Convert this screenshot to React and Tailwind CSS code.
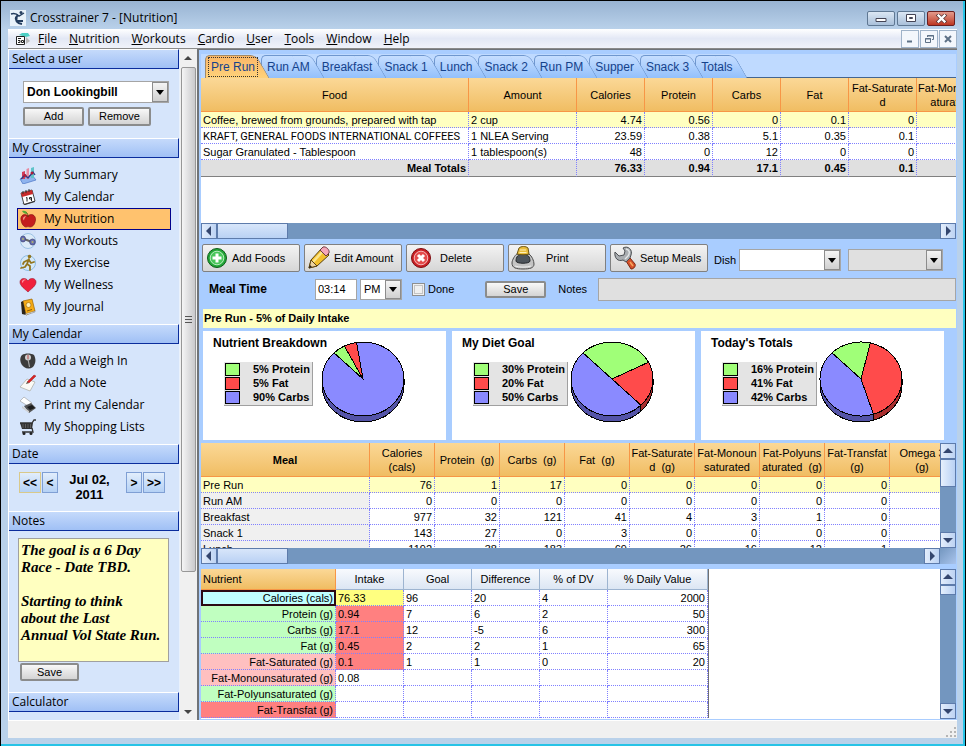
import React, { useState } from "react";

const MENU = ["File", "Nutrition", "Workouts", "Cardio", "User", "Tools", "Window", "Help"];

const TABS = ["Pre Run", "Run AM", "Breakfast", "Snack 1", "Lunch", "Snack 2", "Run PM", "Supper", "Snack 3", "Totals"];

const NOTES = "The goal is a 6 Day\nRace - Date TBD.\n\nStarting to think\nabout the Last\nAnnual Vol State Run.";

const FOODS = [
  ["Coffee, brewed from grounds, prepared with tap", "2 cup", "4.74", "0.56", "0", "0.1", "0", ""],
  ["KRAFT, GENERAL FOODS INTERNATIONAL COFFEES", "1 NLEA Serving", "23.59", "0.38", "5.1", "0.35", "0.1", ""],
  ["Sugar Granulated - Tablespoon", "1 tablespoon(s)", "48", "0", "12", "0", "0", ""],
];

const MEALS = [
  ["Pre Run", 76, 1, 17, 0, 0, 0, 0, 0, ""],
  ["Run AM", 0, 0, 0, 0, 0, 0, 0, 0, ""],
  ["Breakfast", 977, 32, 121, 41, 4, 3, 1, 0, ""],
  ["Snack 1", 143, 27, 0, 3, 0, 0, 0, 0, ""],
  ["Lunch", 1192, 38, 183, 69, 26, 16, 12, 1, ""],
];

const NUTRIENTS = [
  { name: "Calories (cals)", values: ["76.33", "96", "20", "4", "2000"], head: "bg-[#bfffff] outline-2 -outline-offset-2 outline-[#2b0a14]", intake: "bg-[#ffff80]" },
  { name: "Protein (g)", values: ["0.94", "7", "6", "2", "50"], head: "bg-[#c0ffc0]", intake: "bg-[#ff8080]" },
  { name: "Carbs (g)", values: ["17.1", "12", "-5", "6", "300"], head: "bg-[#c0ffc0]", intake: "bg-[#ff8080]" },
  { name: "Fat (g)", values: ["0.45", "2", "2", "1", "65"], head: "bg-[#c0ffc0]", intake: "bg-[#ff8080]" },
  { name: "Fat-Saturated (g)", values: ["0.1", "1", "1", "0", "20"], head: "bg-[#ffc0c0]", intake: "bg-[#ff8080]" },
  { name: "Fat-Monounsaturated (g)", values: ["0.08", "", "", "", ""], head: "bg-[#ffc0c0]", intake: "" },
  { name: "Fat-Polyunsaturated (g)", values: ["", "", "", "", ""], head: "bg-[#c0ffc0]", intake: "" },
  { name: "Fat-Transfat (g)", values: ["", "", "", "", ""], head: "bg-[#ff8080]", intake: "" },
];

const CHARTS = [
  { title: "Nutrient Breakdown", protein: 5, fat: 5, carbs: 90 },
  { title: "My Diet Goal", protein: 30, fat: 20, carbs: 50 },
  { title: "Today's Totals", protein: 16, fat: 41, carbs: 42 },
];

const ICONS = {
  summary: (
    <>
      <path d="M1 13l12-4 4 5-13 4z" fill="#8fb4ee" stroke="#4a74c4" strokeWidth=".7" />
      <path d="M3 6l3-1v8H3z" fill="#d23c5a" />
      <path d="M7.500 3l2.500-1v11H7.500z" fill="#e88aa0" />
      <path d="M12 2l3-1v11h-3z" fill="#5fc4c9" />
      <path d="M2 13l4-4 3 3 5-6 2 3" fill="none" stroke="#2c3b88" strokeWidth="1.300" />
      <circle cx="6" cy="9.500" r="1.500" fill="#b01d38" />
      <circle cx="13" cy="7" r="1.500" fill="#b01d38" />
    </>
  ),
  calendar: (
    <>
      <path d="M2 5l11-3 3 11-11 3.500z" fill="#fff" stroke="#444" />
      <path d="M2 5l11-3 1 4L3 9z" fill="#c92a2a" />
      <path d="M4 3v3M7 2v3M10 1v3" stroke="#333" />
      <path d="M3 15l3 1 10-3v1L6 17z" fill="#333" />
      <path d="M7 10l1-.5v4M10.500 9.500h2v3.500M10.500 9.500v1.500h2" fill="none" stroke="#222" />
    </>
  ),
  apple: (
    <>
      <path d="M9 6C6 3 1 5 2 10c.5 4 3 7 5 7 1 0 1.500-.4 2-.4s1 .4 2 .4c3 0 5-3 5.500-7C17 5 12 3 9 6z" fill="#c41e1e" stroke="#7d0f0f" strokeWidth=".6" />
      <path d="M4 9c0-2 2-3 3-2.500-1 1-2 2-2 4z" fill="#f59a8c" />
      <path d="M9 7c0-2 0-3-2-5" fill="none" stroke="#5b3a12" />
      <path d="M8 4c-2 0-4-1-5-3 3-.5 5 0 5 3z" fill="#55a834" />
    </>
  ),
  workouts: (
    <>
      <circle cx="9" cy="9" r="7.500" fill="#dcebf8" stroke="#9cc2e4" />
      <path d="M5 7l8 3" stroke="#666" strokeWidth="2" />
      <ellipse cx="4" cy="7" rx="2.500" ry="3" fill="#6a70ae" stroke="#3a3f74" strokeWidth=".7" />
      <ellipse cx="13.500" cy="10" rx="2.800" ry="3" fill="#6a70ae" stroke="#3a3f74" strokeWidth=".7" />
      <circle cx="4" cy="7" r="1" fill="#b3b46c" />
      <circle cx="13.500" cy="10" r="1" fill="#b3b46c" />
    </>
  ),
  exercise: (
    <>
      <circle cx="9" cy="9" r="7.500" fill="#d4e8f8" stroke="#8dbce3" />
      <circle cx="10.500" cy="2.500" r="1.800" fill="#93751c" />
      <path d="M10 5l-2 5 3 2v4M8 10l-2 3-4 1M9 6L5 8l-1 2M10 6l2 3 3-1" fill="none" stroke="#93751c" strokeWidth="1.800" strokeLinecap="round" strokeLinejoin="round" />
    </>
  ),
  heart: (
    <>
      <path d="M9 16C6 13 1 10 1 6c0-4 6-5 8-1 2-4 8-3 8 1 0 4-5 7-8 10z" fill="#f0203c" stroke="#9e1026" strokeWidth=".6" />
      <path d="M3 6c0-2 2-3 4-2-2 0-3 1-3 3z" fill="#ff9aa8" />
    </>
  ),
  journal: (
    <>
      <path d="M4 3l9-2 3 12-9 4z" fill="#f5ab16" stroke="#9b6400" strokeWidth=".7" />
      <path d="M4 3L2 4l1 12 4 1z" fill="#2d2519" />
      <path d="M6 16l10-3v1L7 17z" fill="#fff" stroke="#555" strokeWidth=".4" />
      <circle cx="9.500" cy="7" r="2.500" fill="#fff0b8" stroke="#a66f07" strokeWidth=".7" />
      <path d="M8 13l5-1.500" stroke="#8b5b06" />
    </>
  ),
  weigh: (
    <>
      <path d="M3 3c3-2 9-2 12 0 2 4 2 8-1 12-3 2-6 2-9 0C1 12 0 6 3 3z" fill="#3c3c3c" />
      <circle cx="9" cy="5.500" r="3" fill="#cfcfcf" />
      <path d="M9 7l1.500 8" stroke="#aaa" strokeWidth="1.200" />
      <path d="M9 7V3" stroke="#b42525" strokeWidth=".8" />
    </>
  ),
  note: (
    <>
      <path d="M1 13l7-8 8 3-5 9z" fill="#fafaf6" stroke="#a9a9a0" strokeWidth=".7" />
      <path d="M8 8l7-7 2 1-7 7z" fill="#d92323" stroke="#8f1010" strokeWidth=".4" />
      <path d="M8 8l2 1-3 1z" fill="#443" />
    </>
  ),
  printer: (
    <>
      <path d="M1 5l4-4 8 6-4 3z" fill="#fff" stroke="#999" strokeWidth=".6" />
      <path d="M5 10l7-3 5 5-7 5z" fill="#555" />
      <path d="M8 11l5-2 3 3-5 2z" fill="#1d1d1d" />
      <path d="M3 10l7 5v2l-7-5z" fill="#cfcfcf" />
    </>
  ),
  cart: (
    <>
      <path d="M1 5h12l2-3h2" fill="none" stroke="#333" strokeWidth="1.300" />
      <path d="M1 5h13l-1 6H3z" fill="#333" />
      <path d="M4 6v4M6.500 6v4M9 6v4M11.500 6v4" stroke="#7a7a7a" strokeWidth=".6" />
      <path d="M13 10l1 4H3" fill="none" stroke="#333" strokeWidth="1.300" />
      <circle cx="5" cy="15.500" r="1.500" fill="#222" />
      <circle cx="12" cy="15.500" r="1.500" fill="#222" />
    </>
  ),
};

const CROSS_LINKS = [
  ["summary", "My Summary"],
  ["calendar", "My Calendar"],
  ["apple", "My Nutrition"],
  ["workouts", "My Workouts"],
  ["exercise", "My Exercise"],
  ["heart", "My Wellness"],
  ["journal", "My Journal"],
];

const CALENDAR_LINKS = [
  ["weigh", "Add a Weigh In"],
  ["note", "Add a Note"],
  ["printer", "Print my Calendar"],
  ["cart", "My Shopping Lists"],
];

const TOOLS = [
  {
    label: "Add Foods",
    gap: "pl-[3px]",
    icon: (
      <>
        <circle cx="12" cy="12" r="9.500" fill="#22a637" stroke="#0d5c1a" />
        <circle cx="12" cy="12" r="6.800" fill="#48c65a" stroke="#d9f7dc" strokeWidth=".8" />
        <path d="M10.500 7.500h3v3h3v3h-3v3h-3v-3h-3v-3h3z" fill="#fff" />
      </>
    ),
  },
  {
    label: "Edit Amount",
    gap: "pl-[3px]",
    icon: (
      <>
        <path d="M2 22l2-8L15 2l7 7L10 20z" fill="#f3c02c" stroke="#5a4210" />
        <path d="M6 16L16 5" stroke="#fbe58c" strokeWidth="2.500" />
        <path d="M13 4l3-3c3-1 7 3 6 6l-3 3z" fill="#f4a6b8" stroke="#6b3b44" />
        <path d="M2 22l2-8 6 6z" fill="#edd3a0" stroke="#5a4210" />
        <path d="M2 22l1-3 2 2z" fill="#222" />
      </>
    ),
  },
  {
    label: "Delete",
    gap: "pl-[7px]",
    icon: (
      <>
        <circle cx="12" cy="12" r="9.500" fill="#c91f23" stroke="#7c0e12" />
        <circle cx="12" cy="12" r="6.800" fill="#e34b4b" stroke="#fbdada" strokeWidth=".8" />
        <path d="M9 9l6 6M15 9l-6 6" stroke="#fff" strokeWidth="3" />
      </>
    ),
  },
  {
    label: "Print",
    gap: "pl-[11px]",
    icon: (
      <>
        <path d="M1 17c0-3 3-8 5-9h12c3 2 5 7 5 10 0 4-4 5-11 5S1 22 1 17z" fill="#c4c4c4" stroke="#4c4c4c" />
        <path d="M5 15c0-4 2-7 7-7s7 3 7 7c0 3-14 3-14 0z" fill="#4e555c" stroke="#26292c" />
        <path d="M6 8l2-6c2-2 7-2 9 0l1 6c-3 1-9 1-12 0z" fill="#e9bd3c" stroke="#6d5410" />
        <path d="M9 4h6M8.500 6.500h7" stroke="#fdf0b8" strokeWidth="1.200" />
        <path d="M4 20c4 1.500 12 1.500 16 0" fill="none" stroke="#eee" />
      </>
    ),
  },
  {
    label: "Setup Meals",
    gap: "pl-[3px]",
    icon: (
      <>
        <path d="M13 15l4-3 5 6c1 2-1 5-4 5z" fill="#d5502a" stroke="#7a2810" />
        <path d="M17 16l3 4" stroke="#f7a55c" strokeWidth="1.500" />
        <path d="M10 2C15-1 20 4 18 9l-1 3-4 4-3-2C5 16 1 12 2 6l4 4 5-1 1-4z" fill="#a9adb1" stroke="#4d5054" />
        <path d="M13 3c4 1 4 4 2 7l-3 3" fill="none" stroke="#e4e7e9" strokeWidth="1.300" />
      </>
    ),
  },
];

const NUM_CELL = "border-r border-b border-dotted border-[#8080ff] px-[2px] pt-[2px] text-right";
const TEXT_CELL = "border-r border-b border-dotted border-[#8080ff] pt-[2px] pl-[2px] text-left whitespace-nowrap";
const ORANGE_HEAD = "bg-linear-to-b from-[#fbd896] to-[#f0bd62] border-r border-b border-[#f79646] font-normal leading-[14px]";
const CLASSIC_BUTTON = "rounded-[2px] border-2 border-[#8b8c8c] bg-linear-to-b from-[#f8f8f8] to-[#d4d4d4] leading-none";
const BLUE_KEY = "h-[21px] border bg-linear-to-b from-[#e2eefc] to-[#b5d1f5] font-bold text-[12px] leading-none";

function SideHeader({ children }) {
  return (
    <h2 className="h-[20px] shrink-0 border-t border-r border-b border-t-white border-r-[#0a2c9c] border-b-[#0a2c9c] bg-linear-to-b from-[#c5dafb] to-[#a0c0f5] pl-[3px] text-[12px] leading-[18px]">
      {children}
    </h2>
  );
}

function SideLinks({ items, active }) {
  return (
    <ul className="pl-[8px] pr-[8px]">
      {items.map(([icon, label]) => (
        <li key={label}>
          <a
            href="#"
            className={`flex h-[22px] items-center gap-[7px] border pl-[1px] text-[12px] ${
              label === active ? "border-[#00008b] bg-[#ffc26e]" : "border-transparent"
            }`}
          >
            <svg viewBox="0 0 18 18" className="h-[18px] w-[18px]">{ICONS[icon]}</svg>
            <span className="leading-[18px]">{label}</span>
          </a>
        </li>
      ))}
    </ul>
  );
}

function Combo({ label, options, className, selectClass }) {
  return (
    <div className={`flex border border-[#a5a5a5] ${className}`}>
      <select aria-label={label} className={`min-w-0 flex-1 appearance-none px-[3px] outline-none ${selectClass || ""}`}>
        {options.map((o) => (
          <option key={o}>{o}</option>
        ))}
      </select>
      <span className="flex w-[16px] items-center justify-center border border-[#8c8c8c] bg-linear-to-b from-[#f4f4f4] to-[#d0d0d0]">
        <svg viewBox="0 0 8 5" className="h-[5px] w-[8px]"><path d="M0 0h8L4 5z" /></svg>
      </span>
    </div>
  );
}

const ARROWS = {
  left: "M7 0v10L2 5z",
  right: "M3 0v10l5-5z",
  up: "M0 7h10L5 2z",
  down: "M0 3h10L5 8z",
};

function ScrollKey({ dir }) {
  return (
    <button
      aria-label={`Scroll ${dir}`}
      className="flex h-[16px] w-[16px] shrink-0 items-center justify-center border border-[#5d7bab] bg-linear-to-r from-[#e3edfb] to-[#bdd3f3]"
    >
      <svg viewBox="0 0 10 10" className="h-[10px] w-[10px]"><path d={ARROWS[dir]} fill="#34466e" /></svg>
    </button>
  );
}

function HScroll() {
  return (
    <div className="flex h-[16px] shrink-0 bg-[#7396bf]">
      <ScrollKey dir="left" />
      <div className="w-[71px] border border-[#5d7bab] bg-linear-to-b from-[#d8e6fa] to-[#b9d1f4]" />
      <div className="flex-1" />
      <ScrollKey dir="right" />
    </div>
  );
}

function VScroll({ thumb }) {
  return (
    <div className="flex flex-1 flex-col bg-[#7396bf]">
      <ScrollKey dir="up" />
      <div className={`border border-[#5d7bab] bg-linear-to-r from-[#e6f0fc] to-[#b9d1f4] ${thumb}`} />
      <div className="flex-1" />
      <ScrollKey dir="down" />
    </div>
  );
}

// angles are in degrees, clockwise from twelve o'clock
function Pie({ protein, fat, carbs }) {
  const rx = 41;
  const ry = 37;
  const cx = 42;
  const cy = 38;
  const depth = 6;
  const total = protein + fat + carbs;
  const point = (deg) => {
    const rad = (deg * Math.PI) / 180;
    return [cx + rx * Math.sin(rad), cy - ry * Math.cos(rad)];
  };

  let angle = -45;
  const slices = [
    [protein, "#a0ff78", "#5fa848"],
    [fat, "#ff4b4b", "#a92f2f"],
    [carbs, "#8a8aff", "#5454a8"],
  ].map(([value, fill, side]) => {
    const from = angle;
    angle += (value / total) * 360;
    return { from, to: angle, fill, side };
  });

  return (
    <svg viewBox="0 0 84 83" className="h-[83px] w-[84px] shrink-0" shapeRendering="crispEdges" stroke="#000">
      {slices.map(({ from, to, side }) => {
        const a = Math.max(from, 90);
        const b = Math.min(to, 270);
        if (a >= b) return null;
        const [x1, y1] = point(a);
        const [x2, y2] = point(b);
        return (
          <path
            key={side}
            d={`M${x1} ${y1}A${rx} ${ry} 0 0 1 ${x2} ${y2}V${y2 + depth}A${rx} ${ry} 0 0 0 ${x1} ${y1 + depth}Z`}
            fill={side}
          />
        );
      })}
      {slices.map(({ from, to, fill }) => {
        const [x1, y1] = point(from);
        const [x2, y2] = point(to);
        return (
          <path
            key={fill}
            d={`M${cx} ${cy}L${x1} ${y1}A${rx} ${ry} 0 ${to - from > 180 ? 1 : 0} 1 ${x2} ${y2}Z`}
            fill={fill}
          />
        );
      })}
    </svg>
  );
}

function ChartCard({ title, protein, fat, carbs }) {
  const rows = [
    ["bg-[#a0ff78]", `${protein}% Protein`],
    ["bg-[#ff4b4b]", `${fat}% Fat`],
    ["bg-[#8a8aff]", `${carbs}% Carbs`],
  ];
  return (
    <section className="flex h-[109px] flex-1 bg-white pt-[10px]">
      <div className="w-[118px] shrink-0 pl-[10px] font-bold">
        <h3 className="text-[12px] leading-[4px] whitespace-nowrap">{title}</h3>
        <ul className="mt-[17px] ml-[11px] w-max border-r border-b border-[#a0a0a0] bg-[#e4e4e4] pr-[2px] pb-[1px]">
          {rows.map(([color, text]) => (
            <li key={text} className="flex h-[14px] items-center gap-[13px] pl-[1px]">
              <span className={`h-[13px] w-[15px] border border-black ${color}`} />
              <span>{text}</span>
            </li>
          ))}
        </ul>
      </div>
      <Pie protein={protein} fat={fat} carbs={carbs} />
    </section>
  );
}

function Sidebar() {
  return (
    <div className="flex w-[189px] shrink-0 border-l border-white bg-[#d6e5fb] font-['Open_Sans','Noto_Sans',sans-serif]">
      <div className="flex flex-1 flex-col overflow-hidden border-r border-[#e9f1fc]">
        <SideHeader>Select a user</SideHeader>
        <div className="px-[14px] pt-[12px] pb-[12px] font-['Liberation_Sans',Arial,sans-serif]">
          <Combo label="User" options={["Don Lookingbill"]} className="h-[22px] w-[146px] bg-white" selectClass="text-[12px] font-bold" />
          <div className="mt-[4px] flex gap-[4px]">
            <button className={`h-[19px] w-[61px] ${CLASSIC_BUTTON}`}>Add</button>
            <button className={`h-[19px] w-[63px] ${CLASSIC_BUTTON}`}>Remove</button>
          </div>
        </div>
        <SideHeader>My Crosstrainer</SideHeader>
        <div className="pt-[6px] pb-[6px]">
          <SideLinks items={CROSS_LINKS} active="My Nutrition" />
        </div>
        <SideHeader>My Calendar</SideHeader>
        <div className="pt-[6px] pb-[6px]">
          <SideLinks items={CALENDAR_LINKS} />
        </div>
        <SideHeader>Date</SideHeader>
        <div className="flex h-[47px] shrink-0 gap-[1px] pt-[8px] pl-[10px] font-['Liberation_Sans',Arial,sans-serif]">
          <button aria-label="Back a week" className={`w-[22px] border-[#d9c98a] ${BLUE_KEY}`}>&lt;&lt;</button>
          <button aria-label="Back a day" className={`w-[16px] border-[#7f9fd4] ${BLUE_KEY}`}>&lt;</button>
          <p className="flex-1 pr-[5px] text-center text-[13px] leading-[15px] font-bold">Jul 02,<br />2011</p>
          <button aria-label="Forward a day" className={`w-[16px] border-[#7f9fd4] ${BLUE_KEY}`}>&gt;</button>
          <button aria-label="Forward a week" className={`mr-[14px] w-[22px] border-[#7f9fd4] ${BLUE_KEY}`}>&gt;&gt;</button>
        </div>
        <SideHeader>Notes</SideHeader>
        <div className="flex flex-col items-start pt-[7px] pr-[10px] pb-[11px] pl-[9px]">
          <textarea
            aria-label="Notes"
            className="h-[124px] w-full resize-none overflow-hidden border border-[#a0a0a0] bg-[#ffffc0] px-[2px] pt-[3px] font-['Liberation_Serif',serif] text-[15px] leading-[17px] font-bold italic outline-none"
            defaultValue={NOTES}
          />
          <button className={`mt-[1px] ml-[2px] h-[18px] w-[59px] font-['Liberation_Sans',Arial,sans-serif] ${CLASSIC_BUTTON}`}>Save</button>
        </div>
        <SideHeader>Calculator</SideHeader>
      </div>
      <div className="flex w-[17px] flex-col items-center border-r border-[#f0f0f0] bg-[#f0f0f0]">
        <button aria-label="Scroll up" className="flex h-[18px] items-center">
          <svg viewBox="0 0 8 4" className="h-[4px] w-[8px]"><path d="M0 4h8L4 0z" fill="#444" /></svg>
        </button>
        <div className="flex h-[505px] w-[15px] items-center justify-center rounded-[2px] border border-[#979797] bg-linear-to-r from-[#f5f5f5] to-[#c9c9cc]">
          <svg viewBox="0 0 7 8" className="h-[8px] w-[7px]"><path d="M0 .5h7M0 3.500h7M0 6.500h7" stroke="#555" /></svg>
        </div>
        <div className="flex-1" />
        <button aria-label="Scroll down" className="flex h-[16px] items-center">
          <svg viewBox="0 0 8 4" className="h-[4px] w-[8px]"><path d="M0 0h8L4 4z" fill="#444" /></svg>
        </button>
      </div>
    </div>
  );
}

function TabStrip() {
  const [active, setActive] = useState("Pre Run");
  return (
    <div role="tablist" className="flex h-[24px] shrink-0 items-end bg-[#bfdaff] pl-[4px]">
      {TABS.map((tab, i) => {
        const on = tab === active;
        const skin = on
          ? "bg-linear-to-b from-[#f9b668] to-[#ffd27a] border-[#a08a6a]"
          : "bg-linear-to-b from-[#c6deff] to-[#93c0fb] border-[#6f97cf]";
        return (
          <button
            key={tab}
            role="tab"
            aria-selected={on}
            onClick={() => setActive(tab)}
            className="relative h-[23px] px-[6px] text-[12px] text-[#15428b]"
            style={{ zIndex: TABS.length - i }}
          >
            <span className={`absolute top-0 right-[10px] bottom-0 left-0 rounded-tl-[5px] border-t border-l ${skin}`} />
            <span className={`absolute top-0 -right-[2px] bottom-0 w-[20px] skew-x-[30deg] rounded-tr-[6px] border-t border-r ${skin}`} />
            <span className={`relative block leading-[18px] ${on ? "-mx-[3px] px-[2px] border border-dotted border-[#333]" : ""}`}>{tab}</span>
          </button>
        );
      })}
      <div className="h-full flex-1 border-b border-[#44658f]" />
    </div>
  );
}

function FoodTable() {
  return (
    <div className="h-[145px] shrink-0 overflow-hidden bg-white">
      <table className="w-[783px] table-fixed border-separate border-spacing-0">
        <colgroup>
          <col className="w-[268px]" />
          <col className="w-[108px]" />
          <col span={6} className="w-[68px]" />
        </colgroup>
        <thead>
          <tr className="h-[34px]">
            {["Food", "Amount", "Calories", "Protein", "Carbs", "Fat"].map((h) => (
              <th key={h} className={ORANGE_HEAD}>{h}</th>
            ))}
            <th className={ORANGE_HEAD}>Fat-Saturate<br />d</th>
            <th className={`whitespace-nowrap ${ORANGE_HEAD}`}>Fat-Monouns<br />aturated</th>
          </tr>
        </thead>
        <tbody>
          {FOODS.map((row, i) => {
            // brand names in capitals need the narrower face to fit the column
            const caps = row[0] === row[0].toUpperCase();
            return (
              <tr key={row[0]} className={`h-[16px] leading-[13px] ${i === 0 ? "bg-[#ffffc0]" : ""}`}>
                {row.map((v, j) => (
                  <td key={j} className={`${j < 2 ? TEXT_CELL : NUM_CELL} ${j === 0 && caps ? "font-['Roboto',sans-serif]" : ""}`}>{v}</td>
                ))}
              </tr>
            );
          })}
          <tr className="h-[17px] bg-[#e0e0e0] leading-[16px] font-bold">
            {["Meal Totals", "", "76.33", "0.94", "17.1", "0.45", "0.1", ""].map((v, j) => (
              <td key={j} className="border-r border-b border-r-[#8080ff] border-b-[#808080] px-[2px] text-right [border-right-style:dotted]">{v}</td>
            ))}
          </tr>
        </tbody>
      </table>
    </div>
  );
}

function Toolbar() {
  return (
    <div className="shrink-0 pb-[3px]">
      <div className="flex pt-[5px] pl-[1px]">
        <div className="flex gap-[4px]">
          {TOOLS.map(({ label, gap, icon }) => (
            <button
              key={label}
              className="flex h-[28px] w-[98px] items-center rounded-[2px] border border-[#808080] bg-linear-to-b from-[#f3f3f3] to-[#d6d6d6] pl-[2px]"
            >
              <svg viewBox="0 0 24 24" className="h-[24px] w-[24px] shrink-0">{icon}</svg>
              <span className={`whitespace-nowrap ${gap}`}>{label}</span>
            </button>
          ))}
        </div>
        <div className="flex flex-1 items-center pt-[4px] pl-[6px]">
          <span className="w-[25px]">Dish</span>
          <Combo label="Dish" options={[""]} className="h-[22px] w-[102px] bg-white" />
          <Combo label="Portion" options={[""]} className="ml-[7px] h-[22px] w-[95px] bg-[#e0e0e0]" />
        </div>
      </div>
      <div className="flex h-[34px] items-center pl-[8px]">
        <label htmlFor="meal-time" className="w-[106px] text-[12px] font-bold">Meal Time</label>
        <input id="meal-time" defaultValue="03:14" className="h-[21px] w-[42px] border border-[#a5a5a5] bg-white px-[2px] outline-none" />
        <Combo label="AM or PM" options={["PM"]} className="ml-[3px] h-[21px] w-[42px] bg-white" />
        <label className="ml-[10px] flex items-center gap-[3px]">
          <input type="checkbox" className="h-[13px] w-[13px] appearance-none border border-[#8e8f8f] bg-[#f0f0f0] outline-1 -outline-offset-3 outline-[#c4c4c4]" />
          Done
        </label>
        <button className={`ml-[31px] h-[17px] w-[61px] ${CLASSIC_BUTTON}`}>Save</button>
        <label htmlFor="meal-notes" className="ml-[12px] w-[40px]">Notes</label>
        <input id="meal-notes" className="h-[23px] min-w-0 flex-1 border border-[#a5a5a5] bg-[#e0e0e0] outline-none" />
      </div>
    </div>
  );
}

function MealTable() {
  const heads = [
    ["Calories", "(cals)"],
    ["Protein  (g)"],
    ["Carbs  (g)"],
    ["Fat  (g)"],
    ["Fat-Saturate", "d  (g)"],
    ["Fat-Monoun", "saturated"],
    ["Fat-Polyuns", "aturated  (g)"],
    ["Fat-Transfat", "(g)"],
    ["Omega 3", "(g)"],
  ];
  return (
    <div className="mt-[3px] flex h-[121px] shrink-0">
      <div className="flex min-w-0 flex-1 flex-col">
        <div className="min-h-0 flex-1 overflow-hidden bg-white">
          <table className="w-[754px] table-fixed border-separate border-spacing-0">
            <colgroup>
              <col className="w-[169px]" />
              <col span={9} className="w-[65px]" />
            </colgroup>
            <thead>
              <tr className="h-[34px]">
                <th className={`${ORANGE_HEAD} font-bold!`}>Meal</th>
                {heads.map((lines) => (
                  <th key={lines[0]} className={`whitespace-pre ${ORANGE_HEAD}`}>{lines.join("\n")}</th>
                ))}
              </tr>
            </thead>
            <tbody>
              {MEALS.map((row, i) => (
                <tr key={row[0]} className={`h-[16px] leading-[13px] ${i === 0 ? "bg-[#ffffc0]" : ""}`}>
                  {row.map((v, j) => (
                    <td key={j} className={j === 0 ? `${TEXT_CELL} ${i === 0 ? "" : "bg-[#f0f0f0]"}` : NUM_CELL}>{v}</td>
                  ))}
                </tr>
              ))}
            </tbody>
          </table>
        </div>
        <HScroll />
      </div>
      <div className="flex w-[16px] flex-col">
        <VScroll thumb="h-[28px]" />
        <div className="h-[16px] bg-linear-to-br from-[#7396bf] to-[#a9c4ec]" />
      </div>
    </div>
  );
}

function NutrientTable() {
  const head = "border-r border-b border-[#9db4d0] bg-linear-to-b from-[#f8fafd] to-[#dce6f3] font-normal";
  return (
    <div className="mt-[5px] flex min-h-0 flex-1">
      <div className="min-w-0 flex-1 overflow-hidden bg-white">
        <table className="w-[508px] table-fixed border-separate border-spacing-0 border-r border-[#707070]">
          <colgroup>
            <col className="w-[135px]" />
            <col span={4} className="w-[68px]" />
            <col />
          </colgroup>
          <thead>
            <tr className="h-[21px]">
              <th className={`pl-[2px] text-left ${ORANGE_HEAD}`}>Nutrient</th>
              {["Intake", "Goal", "Difference", "% of DV", "% Daily Value"].map((h) => (
                <th key={h} className={head}>{h}</th>
              ))}
            </tr>
          </thead>
          <tbody>
            {NUTRIENTS.map(({ name, values, head: skin, intake }) => (
              <tr key={name} className="h-[16px] leading-[13px]">
                <th scope="row" className={`${NUM_CELL} font-normal whitespace-nowrap ${skin}`}>{name}</th>
                {values.map((v, j) => (
                  <td key={j} className={`${j === 4 ? NUM_CELL : TEXT_CELL} ${j === 0 ? intake : ""}`}>{v}</td>
                ))}
              </tr>
            ))}
          </tbody>
        </table>
      </div>
      <div className="flex w-[16px] flex-col">
        <VScroll thumb="h-[10px]" />
      </div>
    </div>
  );
}

function TitleBar() {
  const key = "flex h-[15px] w-[28px] items-center justify-center rounded-[2px] border";
  return (
    <header className="flex h-[28px] shrink-0 items-center pt-[6px] pr-[8px] pl-[9px]">
      <svg viewBox="0 0 16 16" className="h-[16px] w-[16px] bg-[#e9f2fa]">
        <path d="M1 4c3-1 6 0 8 2l5-3" fill="none" stroke="#243d5e" strokeWidth="1.400" />
        <path d="M8 5c-3 3-3 5 0 6h5M7 7c-2 4 0 6 5 7" fill="none" stroke="#243d5e" strokeWidth="2" />
        <circle cx="11" cy="2.500" r="1.500" fill="#243d5e" />
      </svg>
      <h1 className="ml-[4px] flex-1 font-['Open_Sans','Noto_Sans',sans-serif] text-[12px]">Crosstrainer 7 - [Nutrition]</h1>
      <div className="flex gap-[2px]">
        <button aria-label="Minimize" className={`${key} border-[#5f7893] bg-linear-to-b from-[#dbe7f4] to-[#a9c0da]`}>
          <svg viewBox="0 0 12 8" className="h-[8px] w-[12px]"><path d="M1 4.500h10v3H1z" fill="#fff" stroke="#445" /></svg>
        </button>
        <button aria-label="Restore" className={`${key} border-[#5f7893] bg-linear-to-b from-[#dbe7f4] to-[#a9c0da]`}>
          <svg viewBox="0 0 12 8" className="h-[8px] w-[12px]"><path d="M1.500.5h9v7h-9z" fill="#fff" stroke="#445" /><path d="M4.500 3.500h3v1h-3z" fill="#fff" stroke="#445" /></svg>
        </button>
        <button aria-label="Close" className={`${key} border-[#6b1f1f] bg-linear-to-b from-[#e39a8c] to-[#bc3420]`}>
          <svg viewBox="0 0 12 8" className="h-[9px] w-[13px]"><path d="M2 0l8 8M10 0L2 8" stroke="#533" strokeWidth="3.500" /><path d="M2.500.5l7 7M9.500.5l-7 7" stroke="#fff" strokeWidth="2.200" /></svg>
        </button>
      </div>
    </header>
  );
}

function MenuBar() {
  const key = "flex h-[18px] w-[18px] items-center justify-center border border-[#9fb3c9] bg-[#f3f7fc]";
  return (
    <nav className="flex h-[20px] shrink-0 items-center border-b border-[#8a8a8a] bg-linear-to-b from-white via-[#e3e8f5] to-[#f0f2f9] pl-[7px] font-['Open_Sans','Noto_Sans',sans-serif] text-[12px]">
      <svg viewBox="0 0 16 14" className="h-[14px] w-[16px]">
        <path d="M4 3l3-2h6l2 3-4 1z" fill="#4ccfc4" />
        <path d="M11 5l4 4-4 3z" fill="#b8b8b8" />
        <path d="M1.500 4.500h8v8h-8z" fill="#fff" stroke="#222" />
        <path d="M3 6.500h3M3 8.500h2v2H3M6.500 8.500h2v2h-2z" fill="none" stroke="#222" />
      </svg>
      <ul className="ml-[7px] flex flex-1 gap-[12px]">
        {MENU.map((item) => (
          <li key={item}>
            <a href="#"><u>{item[0]}</u>{item.slice(1)}</a>
          </li>
        ))}
      </ul>
      <div className="flex gap-[1px]">
        <button aria-label="Minimize document" className={key}>
          <svg viewBox="0 0 10 10" className="h-[10px] w-[10px]"><path d="M2 7.500h5" stroke="#5d7186" strokeWidth="2" /></svg>
        </button>
        <button aria-label="Restore document" className={key}>
          <svg viewBox="0 0 10 10" className="h-[10px] w-[10px]"><path d="M3.500 3V1.500h6v4H8M1.500 4.500h5v4h-5zM1 5h6M3 2h7" fill="none" stroke="#5d7186" /></svg>
        </button>
        <button aria-label="Close document" className={key}>
          <svg viewBox="0 0 10 10" className="h-[10px] w-[10px]"><path d="M2 2l6 6M8 2L2 8" stroke="#5d7186" strokeWidth="2" /></svg>
        </button>
      </div>
    </nav>
  );
}

export default function App() {
  return (
    <div className="flex h-screen flex-col overflow-hidden border-t border-r border-l border-black bg-[#b9d1ea] bg-linear-to-b from-[#98b3d2] to-[#b9d1ea] to-[28px] font-['Liberation_Sans',Arial,sans-serif] text-[11px] text-black">
      <div className="flex min-h-0 flex-1 flex-col border-r-2 border-b-2 border-[#27c3e6]">
        <TitleBar />
        <div className="mr-[6px] mb-[6px] ml-[7px] flex min-h-0 flex-1 flex-col bg-[#f0f0f0]">
          <MenuBar />
          <div className="flex min-h-0 flex-1">
            <Sidebar />
            <main className="flex min-w-0 flex-1 flex-col border-t border-l-2 border-[#6f7378] bg-[#a9cdff] pt-[4px] pr-px pb-px pl-[2px]">
              <TabStrip />
              <FoodTable />
              <HScroll />
              <Toolbar />
              <h2 className="ml-[2px] h-[19px] shrink-0 bg-[#ffffc0] pl-px leading-[19px] font-bold">Pre Run - 5% of Daily Intake</h2>
              <div className="mt-[3px] ml-[2px] flex shrink-0 gap-[6px] pr-[12px]">
                {CHARTS.map((c) => (
                  <ChartCard key={c.title} {...c} />
                ))}
              </div>
              <MealTable />
              <NutrientTable />
            </main>
          </div>
          <footer className="flex h-[18px] shrink-0 items-end justify-end border-t border-white p-px">
            <svg viewBox="0 0 12 12" className="h-[12px] w-[12px]"><path d="M10 2h2v2h-2zM10 6h2v2h-2zM6 6h2v2H6zM10 10h2v2h-2zM6 10h2v2H6zM2 10h2v2H2z" fill="#b5b5b5" /></svg>
          </footer>
        </div>
      </div>
    </div>
  );
}
